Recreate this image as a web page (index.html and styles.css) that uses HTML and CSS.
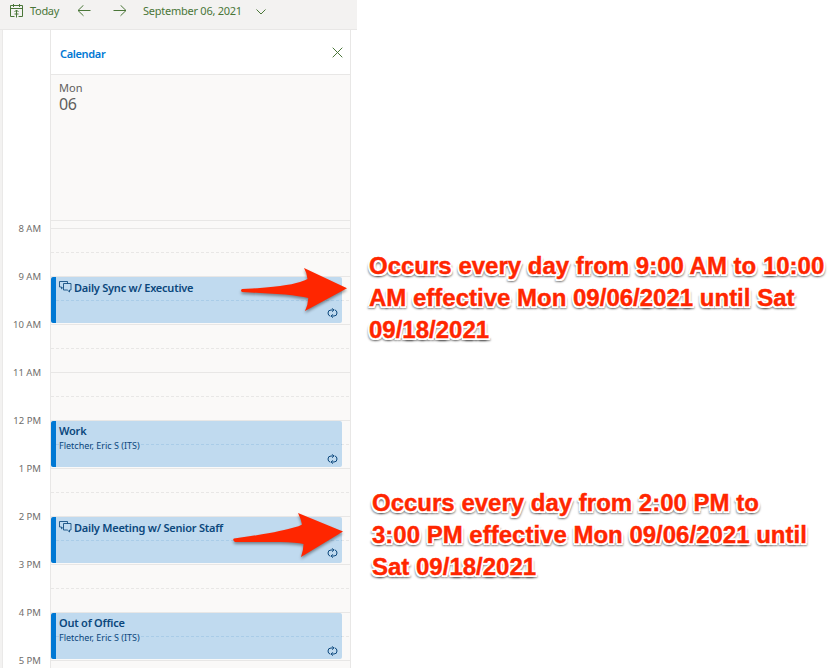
FILE: index.html
```html
<!DOCTYPE html>
<html lang="en">
<head>
<meta charset="utf-8">
<title>Calendar</title>
<link rel="stylesheet" href="styles.css">
</head>
<body>
<svg width="0" height="0" class="defs">
  <symbol id="repeat" viewBox="0 0 11 10"><path d="M3.300 8.200Q1 7.500 1 5Q1 2 4 2H6.500M5.200 .3L6.900 2L5.200 3.700M7.700 1.800Q10 2.500 10 5Q10 8 7 8H4.500M5.800 6.300L4.100 8L5.800 9.700"/></symbol>
  <symbol id="chat" viewBox="0 0 13 12"><path d="M4.500 6L2.500 7.800V6H.5V.5H8.500V2.500M4.500 2.500H12V9H10.500V11L8.300 9H4.500Z"/></symbol>
</svg>
<div class="page">
  <main class="app">
    <header class="toolbar">
      <svg class="today-icon" width="14" height="14" viewBox="0 0 14 14"><path d="M.5 1.500H12.500V12.500H8.500M4.500 12.500H.5V1.500M.5 4.500H12.500M3.500 0V3M9.500 0V3M6.500 13.500V6M4.500 8L6.500 6L8.500 8M4.500 10H8.500"/></svg>
      <span class="today">Today</span>
      <svg class="prev" width="14" height="12" viewBox="0 0 14 12"><path d="M13.500 5.500H1M6.500 .2L1 5.500L6.500 10.800"/></svg>
      <svg class="next" width="14" height="12" viewBox="0 0 14 12"><path d="M.5 5.500H13M7.500 .2L13 5.500L7.500 10.800"/></svg>
      <span class="date">September 06, 2021</span>
      <svg class="chevron" width="10" height="6" viewBox="0 0 10 6"><path d="M.5 .5L5 5L9.500 .5"/></svg>
    </header>
    <div class="body">
      <div class="times">
        <span>8 AM</span><span>9 AM</span><span>10 AM</span><span>11 AM</span><span>12 PM</span><span>1 PM</span><span>2 PM</span><span>3 PM</span><span>4 PM</span><span>5 PM</span>
      </div>
      <section class="day">
        <div class="tab"><b>Calendar</b><svg width="11" height="11" viewBox="0 0 11 11"><path d="M.7 .7L10.300 10.300M10.300 .7L.7 10.300"/></svg></div>
        <div class="day-head"><span class="dow">Mon</span><span class="num">06</span></div>
        <div class="gap"></div>
        <div class="slot"></div>
        <div class="slot"><article class="event"><h3 class="call"><svg width="13" height="12"><use href="#chat"/></svg><span>Daily Sync w/ Executive</span></h3><svg class="repeat"><use href="#repeat"/></svg></article></div>
        <div class="slot"></div>
        <div class="slot"></div>
        <div class="slot"><article class="event titled"><h3>Work</h3><p>Fletcher, Eric S (ITS)</p><svg class="repeat"><use href="#repeat"/></svg></article></div>
        <div class="slot"></div>
        <div class="slot"><article class="event"><h3 class="call"><svg width="13" height="12"><use href="#chat"/></svg><span>Daily Meeting w/ Senior Staff</span></h3><svg class="repeat"><use href="#repeat"/></svg></article></div>
        <div class="slot"></div>
        <div class="slot"><article class="event titled"><h3>Out of Office</h3><p>Fletcher, Eric S (ITS)</p><svg class="repeat"><use href="#repeat"/></svg></article></div>
        <div class="slot"></div>
      </section>
    </div>
  </main>
  <aside class="notes">
    <p class="n1">Occurs every day from 9:00 AM to 10:00<br>AM effective Mon 09/06/2021 until Sat<br>09/18/2021</p>
    <p class="n2">Occurs every day from 2:00 PM to<br>3:00 PM effective Mon 09/06/2021 until<br>Sat 09/18/2021</p>
  </aside>
  <svg class="arrows" width="830" height="668" viewBox="0 0 830 668">
    <path d="M242 289Q285 287 300 282Q306 280 307.500 279Q307 273 304 268L347 288.300L305 311Q308 305 308.300 298Q300 296 285 294.500L242 292Q240 290.500 242 289Z"/>
    <path d="M234 538.500Q275 533 292 528Q300 526 302 524.500Q301 519 298 513L343 531.500L301 557Q303.500 550 303.500 544Q297 542.500 280 542L235 542Q232 540 234 538.500Z"/>
  </svg>
</div>
</body>
</html>
```
FILE: styles.css
```css
* { box-sizing: border-box; }
body { margin: 0; background: #fff; font-family: "Noto Sans", "Open Sans", sans-serif; }
h3, p { margin: 0; }
svg { display: block; fill: none; stroke: currentColor; stroke-width: 1; flex: none; }
.defs { position: absolute; }
.page { position: relative; width: 830px; height: 668px; overflow: hidden; display: flex; }
.app { width: 357px; height: 668px; flex: none; }
.toolbar { height: 30px; background: #f3f2f1; border-bottom: 1px solid #e8e7e6; color: #4a7638; display: flex; align-items: flex-start; padding-left: 10px; font-size: 11px; line-height: 15px; white-space: nowrap; }
.today-icon { margin-top: 4px; }
.today { margin: 3px 0 0 6px; width: 48px; letter-spacing: -.3px; }
.prev { margin: 5px 0 0 -1px; }
.next { margin: 5px 0 0 22px; }
.date { margin: 3px 0 0 16px; width: 113px; letter-spacing: -.25px; }
.chevron { margin-top: 9px; }
.body { display: flex; height: 638px; border-left: 2px solid #f3f2f1; }
.times { width: 48px; border-left: 1px solid #eae9e8; padding: 191px 9px 0 0; font-size: 9.5px; line-height: 16px; color: #706e6c; text-align: right; flex: none; }
.times span { display: block; height: 48px; white-space: nowrap; }
.day { width: 301px; border: solid #e8e7e6; border-width: 0 1px; background: #faf9f8; }
.tab { height: 45px; background: #fff; border-bottom: 1px solid #e8e7e6; display: flex; justify-content: space-between; padding: 16px 7px 0 9px; color: #0078d4; font-size: 11px; line-height: 15px; }
.tab b { font-weight: 600; letter-spacing: -.35px; }
.tab svg { color: #4a7638; margin-top: 1px; }
.day-head { height: 146px; border-bottom: 1px solid #e8e7e6; padding: 5px 8px; color: #605e5c; display: flex; flex-direction: column; }
.dow { font-size: 11px; line-height: 15px; }
.num { font-size: 16px; line-height: 18px; letter-spacing: -.5px; }
.gap { height: 7px; }
.slot { height: 48px; border-top: 1px solid #e8e7e6; position: relative; background: repeating-linear-gradient(90deg, #e8e7e6 0 3px, transparent 3px 5px) 0 23px / 100% 1px no-repeat; }
.event { position: relative; width: 291px; height: 46px; border-left: 5px solid #0078d4; border-radius: 2px; padding: 3px 0 0 3px; color: #0b477c; background: repeating-linear-gradient(90deg, #a9cce8 0 3px, transparent 3px 5px) 0 23px / 100% 1px no-repeat, #c0daef; }
.event h3 { display: flex; font-size: 11px; font-weight: 600; line-height: 15px; letter-spacing: -.23px; white-space: nowrap; }
.call { gap: 2px; }
.event .call svg { margin-top: 1px; stroke-width: .85; }
.event p { font-size: 9px; line-height: 14px; }
.titled { padding-top: 2px; }
.titled p { margin-top: 1px; }
.repeat { position: absolute; right: 4px; bottom: 5px; width: 11px; height: 10px; }
.titled .repeat { bottom: 3px; }
.notes { flex: 1; padding: 250px 0 0 12px; color: #ff2600; font: bold 24px/32px "Liberation Sans", Arial, sans-serif; white-space: nowrap; -webkit-text-stroke: .4px #ff2600; text-shadow: -2px 0 #fff, 2px 0 #fff, 0 -2px #fff, 0 2px #fff, -1.500px -1.500px #fff, 1.500px -1.500px #fff, -1.500px 1.500px #fff, 1.500px 1.500px #fff, -2px 3px 2px #0006, 2px 3px 2px #0006, 0 2px 3px #0006; }
.n1 { height: 237px; }
.n2 { padding-left: 3px; }
.arrows { position: absolute; left: 0; top: 0; fill: #ff2600; stroke: none; filter: drop-shadow(0 2px 1.500px #0006); }
```
